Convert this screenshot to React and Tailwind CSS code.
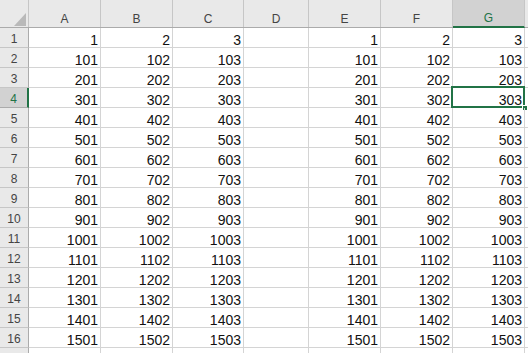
const cols = ['A', 'B', 'C', 'D', 'E', 'F', 'G'];
const widths = ['w-[72px]', 'w-[72px]', 'w-[71px]', 'w-[65px]', 'w-[72px]', 'w-[72px]', 'w-[72px]'];
const rows = Array.from({ length: 17 }, (_, i) => i + 1);

function cellValue(row, col) {
  if (row > 16 || col === 'D') return '';
  const n = { A: 1, B: 2, C: 3, E: 1, F: 2, G: 3 }[col];
  return row === 1 ? String(n) : String((row - 1) * 100 + n);
}

export default function App() {
  return (
    <div className="w-[528px] h-[353px] overflow-hidden bg-white text-[#111] font-['Liberation_Sans',Arial,sans-serif]">
      {/* column headers */}
      <div className="flex h-[28px] bg-[#e9e9e9] border-b border-[#ababab]">
        <div className="relative w-[29px] shrink-0 border-r border-[#c6c6c6]">
          <svg className="absolute left-[14px] top-[13px]" width="12" height="13" viewBox="0 0 12 13">
            <polygon points="0,13 12,0 12,13" fill="#b9b9b9" />
          </svg>
        </div>
        {cols.map((c, i) => (
          <div
            key={c}
            className={`${widths[i]} shrink-0 flex items-end justify-center pb-[2px] text-[12px] leading-[12px] border-r border-[#c6c6c6] ${
              c === 'G' ? 'bg-[#d2d2d2] text-[#217346] border-b-2 border-b-[#217346] -mb-px' : 'text-[#444]'
            }`}
          >
            {c}
          </div>
        ))}
        <div className="flex-1" />
      </div>

      {rows.map((r) => (
        <div key={r} className="flex h-[20px]">
          <div
            className={`w-[29px] shrink-0 flex items-end justify-center pb-[2px] text-[12px] leading-[12px] border-b ${
              r === 4
                ? 'bg-[#d2d2d2] text-[#217346] border-r-2 border-r-[#217346] border-b-[#ababab]'
                : 'bg-[#e9e9e9] text-[#444] border-r border-r-[#ababab] border-b-[#c6c6c6]'
            }`}
          >
            {r <= 16 ? r : ''}
          </div>
          {cols.map((c, i) => (
            <div
              key={c}
              className={`relative ${widths[i]} shrink-0 flex items-end justify-end pr-[2px] text-[14px] leading-[14px] border-r border-b border-[#d4d4d4]`}
            >
              {cellValue(r, c)}
              {r === 4 && c === 'G' && (
                <>
                  <div className="absolute -left-[2px] -top-[2px] right-[-1px] bottom-[-1px] border-2 border-[#217346]" />
                  <div className="absolute right-[-4px] bottom-[-4px] w-[6px] h-[6px] bg-[#217346] border border-white" />
                </>
              )}
            </div>
          ))}
          <div className="flex-1 border-b border-[#d4d4d4]" />
        </div>
      ))}
    </div>
  );
}
